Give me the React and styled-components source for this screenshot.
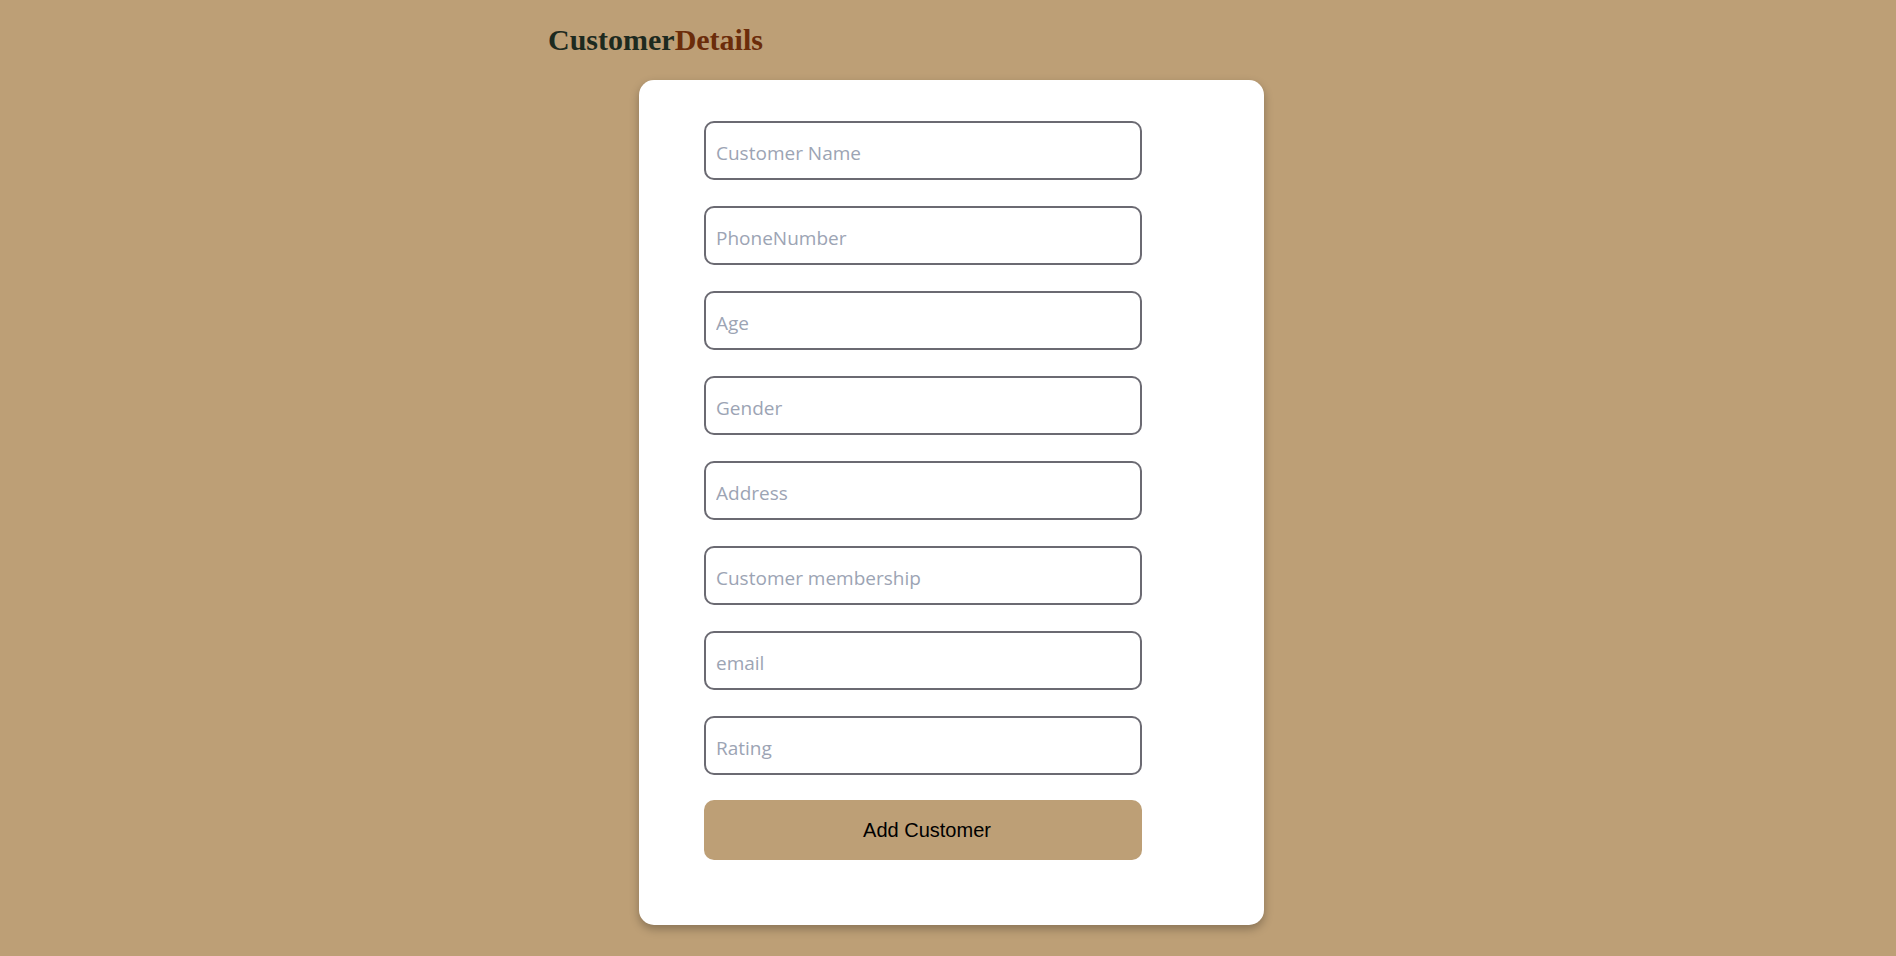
import React from 'react';
import styled, { createGlobalStyle } from 'styled-components';

const GlobalStyle = createGlobalStyle`
  html, body {
    background: #bd9f76;
  }
  body {
    margin: 8px;
    font-family: "Liberation Serif", "Times New Roman", serif;
  }
  * {
    box-sizing: border-box;
  }
`;

const Page = styled.div`
  display: flex;
  flex-direction: column;
  min-height: 940px;
`;

const Title = styled.h2`
  margin: 15px 0 23px calc(50% - 400px);
  font-size: 30px;
  font-weight: bold;
  color: #1d2a1f;

  span {
    color: #6b2c0a;
  }
`;

const Card = styled.div`
  align-self: center;
  margin-left: 7px;
  width: 625px;
  padding: 41px 65px 65px;
  background: #fff;
  border-radius: 15px;
  box-shadow: 0 4px 10px rgba(0, 0, 0, 0.28);
`;

const Form = styled.form`
  display: flex;
  flex-direction: column;
  gap: 26px;
  width: 438px;
`;

const Field = styled.input`
  height: 59px;
  padding: 4px 10px 0;
  border: 2px solid #6b6a72;
  border-radius: 10px;
  font-family: "Open Sans", "Noto Sans", sans-serif;
  font-size: 19px;
  color: #222;
  outline: none;

  &::placeholder {
    color: #9ca4b4;
  }
`;

const SubmitButton = styled.button`
  height: 60px;
  margin-top: -1px;
  border: none;
  border-radius: 10px;
  background: #bd9f76;
  color: #000;
  font-family: "Liberation Sans", Arial, sans-serif;
  font-size: 20px;
  padding-left: 14px;
  cursor: pointer;
`;

const fields = [
  'Customer Name',
  'PhoneNumber',
  'Age',
  'Gender',
  'Address',
  'Customer membership',
  'email',
  'Rating',
];

export default function App() {
  return (
    <Page>
      <GlobalStyle />
      <Title>
        Customer<span>Details</span>
      </Title>
      <Card>
        <Form onSubmit={(e) => e.preventDefault()}>
          {fields.map((f) => (
            <Field key={f} placeholder={f} />
          ))}
          <SubmitButton type="submit">Add Customer</SubmitButton>
        </Form>
      </Card>
    </Page>
  );
}
